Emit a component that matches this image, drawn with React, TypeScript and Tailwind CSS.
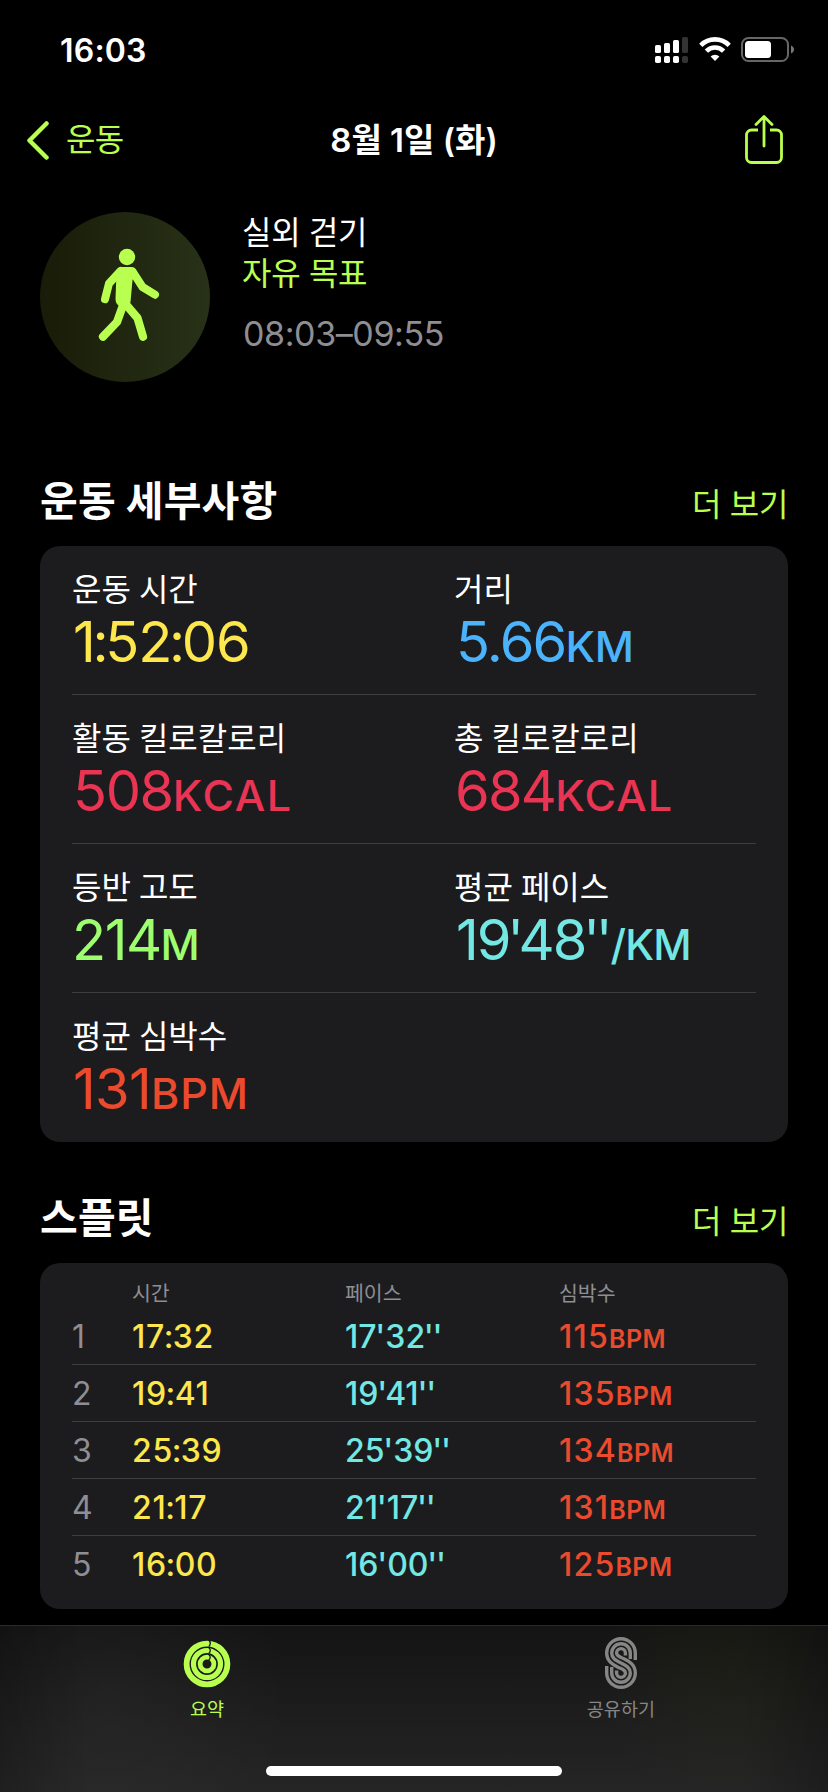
import React from 'react';

interface Metric {
  label: string;
  value: string;
  unit?: string;
  color: string;
  valueClass: string;
  unitClass?: string;
}

interface Split {
  time: string;
  pace: string;
  heartRate: number;
}

const metricRows: Metric[][] = [
  [
    { label: '운동 시간', value: '1:52:06', color: 'text-[#fde74c]', valueClass: 'pl-px tracking-[-1.1px]' },
    { label: '거리', value: '5.66', unit: 'KM', color: 'text-[#4ab3fc]', valueClass: 'pl-[2px] tracking-[-1.8px]', unitClass: 'text-[43px] tracking-[-0.3px]' },
  ],
  [
    { label: '활동 킬로칼로리', value: '508', unit: 'KCAL', color: 'text-[#e93553]', valueClass: 'pl-px tracking-[-1.4px]', unitClass: 'text-[43px] tracking-[1.6px]' },
    { label: '총 킬로칼로리', value: '684', unit: 'KCAL', color: 'text-[#e93553]', valueClass: 'pl-px tracking-[-1.8px]', unitClass: 'text-[43px] tracking-[1.2px]' },
  ],
  [
    { label: '등반 고도', value: '214', unit: 'M', color: 'text-[#9dff70]', valueClass: 'tracking-[-1.5px]', unitClass: 'text-[43px] tracking-normal' },
    { label: '평균 페이스', value: "19'48''", unit: '/KM', color: 'text-[#72e7e3]', valueClass: 'pl-[2px] tracking-[-2px]', unitClass: 'text-[42px] tracking-[-0.8px]' },
  ],
  [{ label: '평균 심박수', value: '131', unit: 'BPM', color: 'text-[#eb4a2d]', valueClass: 'pl-px tracking-[-0.7px]', unitClass: 'text-[43px] tracking-[0.9px]' }],
];

const splits: Split[] = [
  { time: '17:32', pace: "17'32''", heartRate: 115 },
  { time: '19:41', pace: "19'41''", heartRate: 135 },
  { time: '25:39', pace: "25'39''", heartRate: 134 },
  { time: '21:17', pace: "21'17''", heartRate: 131 },
  { time: '16:00', pace: "16'00''", heartRate: 125 },
];

// Tightens the colons and minute/second marks between digits
const Digits: React.FC<{ value: string }> = ({ value }) => (
  <>
    {value.split(/([:'])/).map((part, idx) => {
      if (part === ':') return <span key={idx} className="mx-[-0.04em]">:</span>;
      if (part === "'") return <span key={idx} className="ml-[-0.04em]">'</span>;
      return part;
    })}
  </>
);

const StatusBar: React.FC = () => (
  <div className="flex h-[99px] items-center justify-between pl-[60px] pr-[34px]">
    <span className="mt-[2px] text-[32px] font-semibold leading-none tracking-[0.2px]">16:03</span>
    <div className="mt-px flex h-[26px] items-start gap-[10px]">
      <svg width="34" height="26" viewBox="0 0 34 26" fill="#fff">
        <rect x="0" y="8" width="6" height="8" rx="1.6" />
        <rect x="9" y="6" width="6" height="10" rx="1.6" />
        <rect x="18" y="3" width="6" height="13" rx="1.6" />
        <rect x="27" y="0" width="6" height="16" rx="1.6" fill="#333" />
        <rect x="0" y="19" width="6" height="7" rx="1.8" />
        <rect x="9" y="19" width="6" height="7" rx="1.8" />
        <rect x="18" y="19" width="6" height="7" rx="1.8" />
        <rect x="27" y="19" width="6" height="7" rx="1.8" fill="#333" />
      </svg>
      <svg width="32" height="24" viewBox="0 0 32 24" fill="none">
        <path d="M1.800 8.300a20 20 0 0 1 28.400 0" stroke="#fff" strokeWidth="4.600" />
        <path d="M7.400 14.200a12 12 0 0 1 17.200 0" stroke="#fff" strokeWidth="4.600" />
        <path d="M16 24l-4.400-4.500a6.400 6.400 0 0 1 8.800 0z" fill="#fff" />
      </svg>
      <svg width="53" height="26" viewBox="0 0 53 26" fill="none">
        <rect x="1" y="1" width="46" height="23" rx="6.5" stroke="#666" strokeWidth="2" />
        <rect x="4" y="4" width="26" height="17" rx="3.5" fill="#fff" />
        <path d="M50 8.500c4 1.500 4 6.500 0 8z" fill="#777" />
      </svg>
    </div>
  </div>
);

const NavBar: React.FC = () => (
  <div className="grid h-[81px] grid-cols-3 items-center px-[26px]">
    <div className="flex items-center gap-[16px] text-[#b9ff4f]">
      <svg width="24" height="40" viewBox="0 0 24 40" fill="none">
        <path d="M20.500 3.500L3.500 20.500l17 17" stroke="currentColor" strokeWidth="4.500" strokeLinecap="round" strokeLinejoin="round" />
      </svg>
      <span className="text-[32px] leading-none tracking-[-0.6px]">운동</span>
    </div>
    <h1 className="whitespace-nowrap text-center text-[33px] font-semibold leading-[34px]">8월 1일 (화)</h1>
    <svg className="mr-[18px] justify-self-end text-[#b9ff4f]" width="40" height="50" viewBox="0 0 40 50" fill="none" stroke="currentColor" strokeWidth="2.800" strokeLinecap="round" strokeLinejoin="round">
      <path d="M14 15H7.500a5 5 0 0 0-5 5V42.500a5 5 0 0 0 5 5h25a5 5 0 0 0 5-5V20a5 5 0 0 0-5-5H26" strokeLinecap="butt" />
      <path d="M20 31V2M12 9.500l8-8 8 8" />
    </svg>
  </div>
);

const WalkIcon: React.FC = () => (
  <svg width="170" height="170" viewBox="0 0 170 170" fill="none" stroke="#b9ff4f" strokeLinecap="round" strokeLinejoin="round">
    <circle cx="87" cy="45" r="8.200" fill="#b9ff4f" stroke="none" />
    <path d="M80 55h11q4 .5 5.500 4l-4 9-2 22q-1 4-5 5-6 .5-8.500-3-1.500-2-1.500-5l.8-22z" fill="#b9ff4f" stroke="none" />
    <path d="M80.500 59L69 71.500l-4 15.700" strokeWidth="8" />
    <path d="M92.500 59.500L102.500 75l12.500 7.700" strokeWidth="8" />
    <path d="M83.500 92l-6.500 18-14 14.700M86 92.500l11.500 13.500 5.500 18.700" strokeWidth="8.200" />
  </svg>
);

const WorkoutHeader: React.FC = () => (
  <section className="mt-8 flex h-[170px] gap-8 px-10">
    <div className="size-[170px] rounded-full bg-linear-to-r from-[#191c08] to-[#283218]">
      <WalkIcon />
    </div>
    <div className="text-[32px] leading-[41px] tracking-[-0.3px]">
      <p>실외 걷기</p>
      <p className="text-[#b9ff4f]">자유 목표</p>
      <p className="mt-[19px] pl-px text-[34px] tracking-[-0.4px] text-[#8e8e93]">08:03–09:55</p>
    </div>
  </section>
);

const SectionTitle: React.FC<{ title: string }> = ({ title }) => (
  <div className="flex h-[60px] items-start justify-between px-10">
    <h2 className="text-[41px] font-bold leading-[60px] tracking-[0.2px]">{title}</h2>
    <a className="pt-1 text-[32px] leading-[60px] tracking-[-0.35px] text-[#b9ff4f]">더 보기</a>
  </div>
);

const MetricCell: React.FC<{ metric: Metric }> = ({ metric }) => (
  <div className="pt-[25px]">
    <div className="text-[32px] leading-[38px] [word-spacing:-1px]">{metric.label}</div>
    <div className={`whitespace-nowrap text-[56px] leading-[66px] ${metric.color} ${metric.valueClass}`}>
      <Digits value={metric.value} />
      {metric.unit && <span className={`font-medium ${metric.unitClass}`}>{metric.unit}</span>}
    </div>
  </div>
);

const MetricsCard: React.FC = () => (
  <div className="mx-10 rounded-[20px] bg-[#1c1c1e] px-8">
    {metricRows.map((row, idx) => (
      <div key={idx} className="grid h-[149px] grid-cols-[382px_1fr] border-b border-[#3d3d40] last:border-b-0">
        {row.map((metric) => (
          <MetricCell key={metric.label} metric={metric} />
        ))}
      </div>
    ))}
  </div>
);

const SplitsCard: React.FC = () => (
  <div className="mx-10 h-[346px] rounded-[20px] bg-[#1c1c1e] px-8">
    <div className="grid h-[45px] grid-cols-[60px_213px_214px_1fr] pt-[15px] text-[20.500px] leading-[31px] text-[#8e8e93]">
      <span />
      <span>시간</span>
      <span>페이스</span>
      <span>심박수</span>
    </div>
    {splits.map((split, idx) => (
      <div
        key={idx}
        className="grid h-[57px] grid-cols-[60px_213px_214px_1fr] items-center border-b border-[#3d3d40] pt-[2px] text-[32px] font-medium leading-[34px] tracking-[0.7px] last:border-b-0 last:pt-px"
      >
        <span className="font-normal text-[#8e8e93]">{idx + 1}</span>
        <span className="text-[#fde74c]">
          <Digits value={split.time} />
        </span>
        <span className="tracking-normal text-[#72e7e3]">
          <Digits value={split.pace} />
        </span>
        <span className="tracking-[1.2px] text-[#eb4a2d]">
          {split.heartRate}
          <span className="text-[25px] font-semibold leading-none tracking-[0.5px]">BPM</span>
        </span>
      </div>
    ))}
  </div>
);

const RingsIcon: React.FC = () => (
  <svg width="48" height="48" viewBox="0 0 48 48" fill="none" stroke="#b9ff4f">
    <circle cx="24" cy="24" r="20.400" strokeWidth="5.800" />
    <circle cx="24" cy="24" r="13.500" strokeWidth="5.200" />
    <circle cx="24" cy="24" r="6.900" strokeWidth="4.800" />
    <path d="M25.800 0q3 3.200 0 6.600M25.800 7.500q3 2.800 0 6M25.800 14.500q2.800 2.600 0 5.500" stroke="#171717" strokeWidth="1.300" />
  </svg>
);

const SharingIcon: React.FC = () => (
  <svg width="32" height="52" viewBox="0 0 32 52" fill="none" stroke="#868686" strokeWidth="3.400">
    <path d="M30.300 23V16A14.300 14.300 0 0 0 1.700 16C1.700 24 7.500 27.500 13 30.200 17.500 32.400 20.400 33 20.400 36A4.400 4.400 0 0 1 11.600 36V33.500" />
    <path d="M25.300 22V16A9.300 9.300 0 0 0 6.700 16C6.700 21 10 23 16 26S25.300 31 25.300 36A9.300 9.300 0 0 1 6.700 36V30" />
    <path d="M20.400 18.500V16A4.400 4.400 0 0 0 11.600 16C11.600 19 14.500 19.600 19 21.800 24.500 24.500 30.300 28 30.300 36A14.300 14.300 0 0 1 1.700 36V29" />
  </svg>
);

const TabBar: React.FC = () => (
  <nav className="mt-4 flex h-[167px] flex-col border-t border-[#2b2b2b] bg-[radial-gradient(ellipse_180px_200px_at_110px_70px,rgba(255,255,255,0.03),transparent),radial-gradient(ellipse_130px_150px_at_730px_40px,rgba(90,90,0,0.07),transparent),linear-gradient(to_right,rgba(0,0,0,0.2),transparent_90px,transparent_738px,rgba(0,0,0,0.2)),linear-gradient(to_bottom,#141414,#252525)]">
    <div className="grid grid-cols-2 pt-[11px] text-[18.500px] leading-[24px] tracking-[0.1px]">
      <div className="flex flex-col items-center text-[#b9ff4f]">
        <div className="flex h-[60px] items-start pt-[3px]">
          <RingsIcon />
        </div>
        <span>요약</span>
      </div>
      <div className="flex flex-col items-center text-[#868686]">
        <div className="h-[60px]">
          <SharingIcon />
        </div>
        <span>공유하기</span>
      </div>
    </div>
    <div className="mx-auto mt-auto mb-4 h-[10px] w-[296px] rounded-full bg-white" />
  </nav>
);

export default function App() {
  return (
    <div className="h-[1792px] w-[828px] overflow-hidden bg-black font-['Inter','Noto_Sans_CJK_KR',sans-serif] text-white">
      <StatusBar />
      <NavBar />
      <WorkoutHeader />
      <div className="mt-[89px] mb-[15px]">
        <SectionTitle title="운동 세부사항" />
      </div>
      <MetricsCard />
      <div className="mt-[46px] mb-[15px]">
        <SectionTitle title="스플릿" />
      </div>
      <SplitsCard />
      <TabBar />
    </div>
  );
}
